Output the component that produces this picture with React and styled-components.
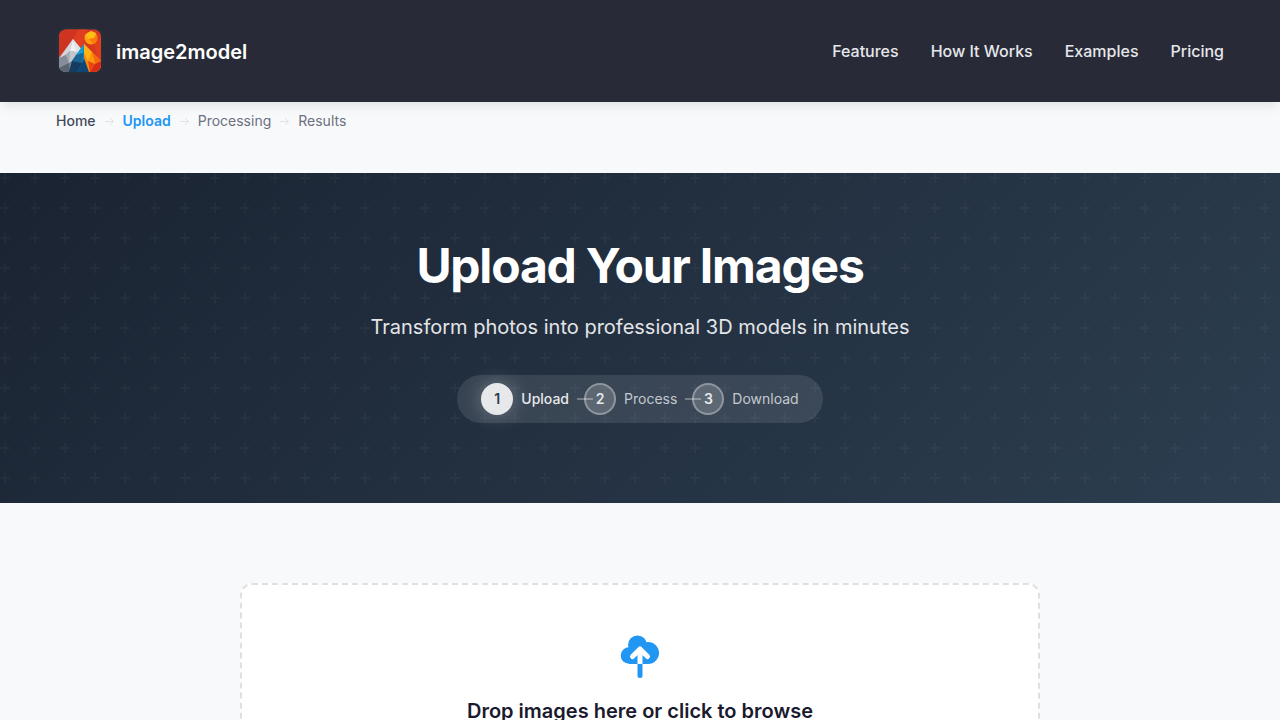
import React from "react";
import styled, { createGlobalStyle } from "styled-components";

const GlobalStyle = createGlobalStyle`
  *, *::before, *::after { box-sizing: border-box; }
  body {
    margin: 0;
    background: #f8f9fb;
    color: #1a1a2e;
    font-family: Inter, "Liberation Sans", sans-serif;
    font-size: 16px;
    line-height: 24px;
    -webkit-font-smoothing: antialiased;
  }
  h1, h2, p, ol { margin: 0; padding: 0; }
  ol { list-style: none; }
  a { text-decoration: none; color: inherit; }
`;

const Header = styled.header`
  position: relative;
  z-index: 2;
  background: #282b37;
  box-shadow: 0 4px 12px -2px rgba(0, 0, 0, 0.12);
`;

const HeaderInner = styled.div`
  display: flex;
  align-items: center;
  justify-content: space-between;
  padding: 27px 56px;
`;

const Brand = styled.a`
  display: flex;
  align-items: center;
  gap: 12px;
  color: #ffffff;
  font-size: 20px;
  font-weight: 600;
  line-height: 32px;
`;

const BrandName = styled.span`
  padding-top: 2px;
`;

const LogoBox = styled.span`
  display: flex;
  width: 48px;
  height: 48px;
  svg { width: 100%; height: 100%; }
`;

const Nav = styled.nav`
  display: flex;
  gap: 32px;
`;

const NavLink = styled.a`
  color: #e6e7ea;
  font-weight: 500;
`;

const Breadcrumb = styled.ol`
  display: flex;
  align-items: center;
  gap: 8px;
  padding: 8px 56px 40px;
  font-size: 14px;
  line-height: 22px;
`;

const BreadcrumbBar = styled.nav`
  padding-bottom: 1px;
`;

const Crumb = styled.li`
  display: flex;
  align-items: center;
  gap: 8px;
  color: ${(p) => (p.$state === "active" ? "#2196f3" : p.$state === "done" ? "#454a5a" : "#6c7080")};
  font-weight: ${(p) => (p.$state === "active" ? 600 : p.$state === "done" ? 500 : 400)};
  svg { display: block; }
`;

const Hero = styled.section`
  position: relative;
  display: flex;
  flex-direction: column;
  align-items: center;
  padding: 64px 24px 80px;
  background: linear-gradient(135deg, #1a2332 0%, #2c3e50 100%);
  text-align: center;
`;

const HeroPattern = styled.svg`
  position: absolute;
  inset: 0;
  width: 100%;
  height: 100%;
`;

const Title = styled.h1`
  position: relative;
  color: #ffffff;
  font-size: 48px;
  font-weight: 700;
  line-height: 58px;
  letter-spacing: -0.025em;
`;

const Subtitle = styled.p`
  position: relative;
  margin-top: 16px;
  color: #e3e5e8;
  font-size: 20px;
  line-height: 32px;
`;

const Steps = styled.ol`
  position: relative;
  display: flex;
  align-items: center;
  gap: 8px;
  margin-top: 32px;
  padding: 8px 24px;
  border-radius: 24px;
  background: rgba(255, 255, 255, 0.1);
`;

const Step = styled.li`
  display: flex;
  align-items: center;
  gap: 8px;
  color: ${(p) => (p.$active ? "#e6e8ea" : "#c3c8ce")};
  font-size: 14px;
  font-weight: ${(p) => (p.$active ? 500 : 400)};
`;

const StepNumber = styled.span`
  display: flex;
  align-items: center;
  justify-content: center;
  width: 32px;
  height: 32px;
  border-radius: 50%;
  border: 2px solid ${(p) => (p.$active ? "#e6e8ea" : "rgba(255, 255, 255, 0.3)")};
  background: ${(p) => (p.$active ? "#e6e8ea" : "rgba(255, 255, 255, 0.18)")};
  box-shadow: ${(p) => (p.$active ? "0 0 20px rgba(255, 255, 255, 0.3)" : "none")};
  color: ${(p) => (p.$active ? "#2c3e50" : "#e6e8ea")};
  font-weight: 600;
`;

const StepLine = styled.li`
  width: 16px;
  height: 2px;
  margin-right: -17px;
  background: rgba(255, 255, 255, 0.3);
`;

const Main = styled.main`
  padding: 80px 24px;
`;

const DropZone = styled.button`
  display: flex;
  flex-direction: column;
  align-items: center;
  width: 100%;
  max-width: 800px;
  margin: 0 auto;
  padding: 46px 24px 64px;
  border: 2px dashed #e0e0e0;
  border-radius: 12px;
  background: #ffffff;
  color: #1a1a2e;
  font: inherit;
  cursor: pointer;
`;

const DropTitle = styled.span`
  margin-top: 16px;
  font-size: 20px;
  font-weight: 600;
  line-height: 32px;
`;

const Logo = () => (
  <svg viewBox="0 0 48 48" aria-hidden="true">
    <defs>
      <clipPath id="logo-clip"><rect x="3" y="2.500" width="42" height="42.500" rx="7" /></clipPath>
    </defs>
    <rect x="0.500" y="0.500" width="47" height="47" rx="10" fill="#25303c" />
    <g clipPath="url(#logo-clip)">
      <path d="M3 2h42v43H3z" fill="#d93820" />
      <path d="M3 2h20L10 22l-7 5z" fill="#cf3420" />
      <path d="M23 2h8l-3 13 4 8-8 2-7-12z" fill="#e03e20" />
      <path d="M38 16l7-6v35z" fill="#e2401b" />
      <circle cx="35" cy="11" r="6.500" fill="#ffa010" />
      <path d="M29 8l6-4 5 2-2 5-5 1z" fill="#ffbd18" />
      <path d="M33 12l5-1 3-4v6l-4 4z" fill="#fb7a0d" />
      <path d="M17 12L3 31v14h20l8-16z" fill="#b2b9c1" />
      <path d="M17 12l-3 12-8 6-3 2z" fill="#d4d8dd" />
      <path d="M17 12l4 13-7-1z" fill="#eef0f2" />
      <path d="M17 12l9 11-5 5z" fill="#dfe2e7" />
      <path d="M14 24l7 1 2 4-10 7z" fill="#c3c8ce" />
      <path d="M3 31l7-3 3 8-10 9z" fill="#858d98" />
      <path d="M10 28l4-4-1 12z" fill="#a3aab3" />
      <path d="M3 41l10-5 2 9H3z" fill="#5b6470" />
      <path d="M13 36l7-5-3 14h-3z" fill="#78818c" />
      <path d="M28 17L16 34l-3 11h20l4-14z" fill="#0f7fb8" />
      <path d="M28 17l-8 11 7-2z" fill="#199ed0" />
      <path d="M20 28l7-2-1 10-10-2z" fill="#1c6591" />
      <path d="M16 34l10 2-5 9h-8z" fill="#173a5f" />
      <path d="M26 36l5-8 4 17H21z" fill="#0e4775" />
      <path d="M28 17l17 17v11H33l-5-14z" fill="#f98a11" />
      <path d="M28 17l8 8-4 9-4-8z" fill="#ffb317" />
      <path d="M36 25l9 9-6 3z" fill="#f66a0c" />
      <path d="M36 25l3 12-7-3z" fill="#fb9810" />
      <path d="M32 34l7 3-5 8z" fill="#e94614" />
      <path d="M39 37l6-3v11H34z" fill="#d82a18" />
    </g>
  </svg>
);

const Arrow = () => (
  <svg width="11" height="12" viewBox="0 0 11 12" fill="none" stroke="#e0e2e5" aria-hidden="true">
    <path d="M1 6.500h8.500M6 3l3.500 3.500L6 10" />
  </svg>
);

const CloudUpload = () => (
  <svg width="48" height="48" viewBox="0 0 48 48" aria-hidden="true">
    <g fill="#2196f3">
      <circle cx="13" cy="24.500" r="8.300" />
      <circle cx="21.500" cy="14" r="9.500" />
      <circle cx="32" cy="22" r="11" />
      <path d="M13 20h19v13H13z" />
    </g>
    <path d="M24 33V18M16.500 25.500L24 18l7.500 7.500" fill="none" stroke="#fff" strokeWidth="5" strokeLinecap="round" strokeLinejoin="round" />
    <path d="M21.500 33h5v11.500a2.500 2.500 0 0 1-5 0z" fill="#2196f3" />
  </svg>
);

const navItems = ["Features", "How It Works", "Examples", "Pricing"];
const crumbs = [
  { label: "Home", state: "done" },
  { label: "Upload", state: "active" },
  { label: "Processing" },
  { label: "Results" },
];
const steps = ["Upload", "Process", "Download"];

export default function App() {
  return (
    <>
      <GlobalStyle />
      <Header>
        <HeaderInner>
          <Brand href="#home"><LogoBox><Logo /></LogoBox><BrandName>image2model</BrandName></Brand>
          <Nav aria-label="Main">
            {navItems.map((item) => <NavLink key={item} href="#">{item}</NavLink>)}
          </Nav>
        </HeaderInner>
      </Header>
      <BreadcrumbBar aria-label="Breadcrumb">
        <Breadcrumb>
          {crumbs.map((c, i) => (
            <Crumb key={c.label} $state={c.state}>
              {i > 0 && <Arrow />}
              {c.state === "done" ? <a href="#home">{c.label}</a> : <span>{c.label}</span>}
            </Crumb>
          ))}
        </Breadcrumb>
      </BreadcrumbBar>
      <Hero>
        <HeroPattern aria-hidden="true">
          <defs>
            <pattern id="plus" width="30" height="30" patternUnits="userSpaceOnUse">
              <path d="M6 4V0H4v4H0v2h4v4h2V6h4V4H6z" fill="#fff" fillOpacity="0.03" />
            </pattern>
          </defs>
          <rect width="100%" height="100%" fill="url(#plus)" />
        </HeroPattern>
        <Title>Upload Your Images</Title>
        <Subtitle>Transform photos into professional 3D models in minutes</Subtitle>
        <Steps>
          {steps.map((label, i) => (
            <React.Fragment key={label}>
              {i > 0 && <StepLine aria-hidden="true" />}
              <Step $active={i === 0}>
                <StepNumber $active={i === 0}>{i + 1}</StepNumber>
                {label}
              </Step>
            </React.Fragment>
          ))}
        </Steps>
      </Hero>
      <Main>
        <DropZone type="button">
          <CloudUpload />
          <DropTitle>Drop images here or click to browse</DropTitle>
        </DropZone>
      </Main>
    </>
  );
}
